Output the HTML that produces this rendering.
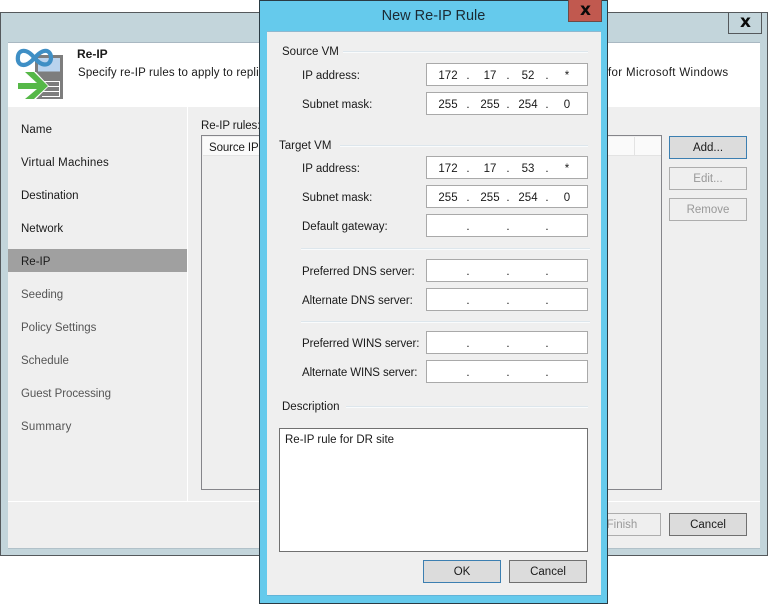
<!DOCTYPE html>
<html><head><meta charset="utf-8">
<style>
html,body{margin:0;padding:0;background:#fff}
body{width:768px;height:604px;position:relative;overflow:hidden;font-family:"Liberation Sans",sans-serif;font-size:11.5px;color:#1a1a1a}
div{position:absolute;box-sizing:border-box}
.t{white-space:nowrap;line-height:18px;height:18px}
.n{left:21px}
.g{color:#555}
.b{text-align:center;line-height:22px;background:#dcdcdc;border:1px solid #707070}
.d{color:#999;background:#efefef;border:1px solid #adadad}
.f{left:426px;width:162px;height:23px;background:#fff;border:1px solid #a9a9a9}
.f span{position:absolute;top:3px;line-height:18px;width:30px;text-align:center}
.l{left:302px}
.s{height:2px;background:#dde6ec;border-bottom:1px solid #f9fbfc}
.x{font-weight:bold;font-size:17px;line-height:18px;height:18px;font-family:"DejaVu Sans",sans-serif;color:#0a0a0a}
</style></head><body>
<div style="left:0;top:12px;width:768px;height:544px;background:#c3d5db;border:1px solid #55595c"></div>
<div style="left:8px;top:42px;width:752px;height:507px;background:#efefef;border-top:1px solid #a9b8c2;border-bottom:1px solid #b1c1c9"></div>
<div style="left:8px;top:43px;width:752px;height:64px;background:#fff"></div>
<div style="left:187px;top:107px;width:1px;height:394px;background:#fff"></div>
<div style="left:8px;top:501px;width:752px;height:1px;background:#fff"></div>
<div style="left:728px;top:12px;width:34px;height:22px;border:1px solid #55595c;border-top:0"></div>
<div class="t x" style="left:740px;top:13px">x</div>

<svg style="position:absolute;left:10px;top:44px" width="60" height="60" viewBox="0 0 60 60">
<rect x="25" y="11" width="28" height="44" fill="#7d7d7d"/>
<rect x="28" y="14" width="22" height="13.500" fill="#b9d3ee"/>
<path d="M32 37.500H49.500V52.500H32M32 42.500H49.500M32 47.500H49.500" fill="none" stroke="#fff"/>
<path d="M24.500 14C21 9.500 17 6.800 13.500 6.800C9.500 6.800 7.800 10.500 7.800 14.500C7.800 18.500 10 21 13.500 21C17.500 21 21 18 24.500 14C28 10 31.500 6.800 35.500 6.800C39 6.800 41 10 41 13.500C41 17.500 39 20.500 35 20.500C31 20.500 28 18 24.500 14Z" fill="none" stroke="#3f8fc5" stroke-width="4.200"/>
<path d="M16 28H26L39 42L26 55H16L28 42Z" fill="#fff"/>
<path d="M15 28H24L38 42L24 55H15L27 45H8V39H27Z" fill="#56b848"/>
</svg>

<div class="t" style="left:77px;top:45px;font-weight:bold;font-size:12px">Re-IP</div>
<div class="t" style="left:78px;top:64px;letter-spacing:.16px">Specify re-IP rules to apply to replica VMs when they are started in the DR site</div>
<div class="t" style="left:608px;top:64px;letter-spacing:.35px">for Microsoft Windows</div>

<div style="left:8px;top:249px;width:179px;height:23px;background:#a0a0a0"></div>
<div class="t n" style="top:121px;letter-spacing:.1px">Name</div>
<div class="t n" style="top:154px;letter-spacing:.2px">Virtual Machines</div>
<div class="t n" style="top:187px">Destination</div>
<div class="t n" style="top:220px">Network</div>
<div class="t n" style="top:253px">Re-IP</div>
<div class="t n g" style="top:286px">Seeding</div>
<div class="t n g" style="top:319px">Policy Settings</div>
<div class="t n g" style="top:352px">Schedule</div>
<div class="t n g" style="top:385px;letter-spacing:-.05px">Guest Processing</div>
<div class="t n g" style="top:418px;letter-spacing:.2px">Summary</div>

<div class="t" style="left:201px;top:117px;letter-spacing:-.1px">Re-IP rules:</div>
<div style="left:201px;top:135px;width:461px;height:355px;border:1px solid #85858a"></div>
<div style="left:203px;top:137px;width:458px;height:19px;background:#fafafa;border-bottom:1px solid #e3e3e3"></div>
<div style="left:634px;top:137px;width:1px;height:19px;background:#e3e3e3"></div>
<div class="t" style="left:209px;top:139px;letter-spacing:-.1px">Source IP</div>

<div class="b" style="left:669px;top:136px;width:78px;height:23px;border-color:#3c7fb1">Add...</div>
<div class="b d" style="left:669px;top:167px;width:78px;height:23px">Edit...</div>
<div class="b d" style="left:669px;top:198px;width:78px;height:23px">Remove</div>
<div class="b d" style="left:583px;top:513px;width:78px;height:23px">Finish</div>
<div class="b" style="left:669px;top:513px;width:78px;height:23px">Cancel</div>

<div style="left:259px;top:0;width:349px;height:604px;background:#65caec;border:1px solid #2a3b44"></div>
<div style="left:267px;top:31px;width:334px;height:565px;background:#efefef;border-top:1px solid #8fb8cf;border-bottom:1px solid #62b4d8"></div>
<div class="t" style="left:260px;top:7px;width:347px;text-align:center;font-size:14.500px;line-height:18px;height:18px;color:#1b2a33">New Re-IP Rule</div>
<div style="left:568px;top:0;width:34px;height:22px;background:#c1594f;border:1px solid #6d4a46;border-top:0"></div>
<div class="t x" style="left:580px;top:1px">x</div>

<div class="t" style="left:282px;top:43px">Source VM</div>
<div class="s" style="left:343px;top:51px;width:245px"></div>
<div class="t l" style="top:67px">IP address:</div>
<div class="f" style="top:63px"><span style="left:6px">172</span><span style="left:26px">.</span><span style="left:48px">17</span><span style="left:66px">.</span><span style="left:86px">52</span><span style="left:105px">.</span><span style="left:125px">*</span></div>
<div class="t l" style="top:96px">Subnet mask:</div>
<div class="f" style="top:92px"><span style="left:6px">255</span><span style="left:26px">.</span><span style="left:48px">255</span><span style="left:66px">.</span><span style="left:86px">254</span><span style="left:105px">.</span><span style="left:125px">0</span></div>

<div class="t" style="left:279px;top:137px">Target VM</div>
<div class="s" style="left:340px;top:145px;width:248px"></div>
<div class="t l" style="top:160px">IP address:</div>
<div class="f" style="top:156px"><span style="left:6px">172</span><span style="left:26px">.</span><span style="left:48px">17</span><span style="left:66px">.</span><span style="left:86px">53</span><span style="left:105px">.</span><span style="left:125px">*</span></div>
<div class="t l" style="top:189px">Subnet mask:</div>
<div class="f" style="top:185px"><span style="left:6px">255</span><span style="left:26px">.</span><span style="left:48px">255</span><span style="left:66px">.</span><span style="left:86px">254</span><span style="left:105px">.</span><span style="left:125px">0</span></div>
<div class="t l" style="top:218px">Default gateway:</div>
<div class="f" style="top:214px"><span style="left:26px">.</span><span style="left:66px">.</span><span style="left:105px">.</span></div>
<div class="s" style="left:301px;top:248px;width:289px"></div>
<div class="t l" style="top:263px;letter-spacing:-.05px">Preferred DNS server:</div>
<div class="f" style="top:259px"><span style="left:26px">.</span><span style="left:66px">.</span><span style="left:105px">.</span></div>
<div class="t l" style="top:292px;letter-spacing:-.05px">Alternate DNS server:</div>
<div class="f" style="top:288px"><span style="left:26px">.</span><span style="left:66px">.</span><span style="left:105px">.</span></div>
<div class="s" style="left:301px;top:321px;width:289px"></div>
<div class="t l" style="top:335px;letter-spacing:-.1px">Preferred WINS server:</div>
<div class="f" style="top:331px"><span style="left:26px">.</span><span style="left:66px">.</span><span style="left:105px">.</span></div>
<div class="t l" style="top:364px;letter-spacing:-.1px">Alternate WINS server:</div>
<div class="f" style="top:360px"><span style="left:26px">.</span><span style="left:66px">.</span><span style="left:105px">.</span></div>

<div class="t" style="left:282px;top:398px">Description</div>
<div class="s" style="left:346px;top:406px;width:242px"></div>
<div style="left:279px;top:428px;width:309px;height:124px;background:#fff;border:1px solid #707070"></div>
<div class="t" style="left:285px;top:431px">Re-IP rule for DR site</div>

<div class="b" style="left:423px;top:560px;width:78px;height:23px;border-color:#3c7fb1">OK</div>
<div class="b" style="left:509px;top:560px;width:78px;height:23px">Cancel</div>
</body></html>
